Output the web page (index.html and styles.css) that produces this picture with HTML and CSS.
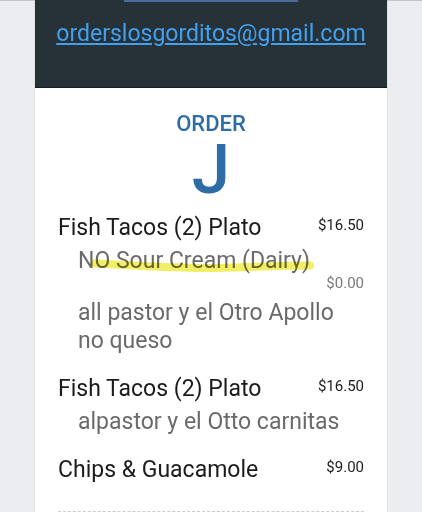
FILE: index.html
```html
<!DOCTYPE html>
<html lang="en">
<head>
    <meta charset="UTF-8">
    <meta name="viewport" content="width=device-width, initial-scale=1.0">
    <title>Order J</title>
    <link rel="stylesheet" href="styles.css">
</head>
<body>

<div class="ticket">
    <div class="ticket-header">
        <div class="header-bar"></div>
        <a class="email" href="mailto:orderslosgorditos@gmail.com">orderslosgorditos@gmail.com</a>
    </div>

    <div class="ticket-body">
        <div class="order-label">ORDER</div>
        <div class="order-letter">J</div>

        <div class="item">
            <div class="item-row">
                <span class="item-name">Fish Tacos (2) Plato</span>
                <span class="item-price">$16.50</span>
            </div>
            <div class="mod">
                NO Sour Cream (Dairy)
                <svg class="marker" width="240" height="30" viewBox="0 0 240 30">
                    <path d="M17 16.5 C60 18.5, 100 21.5, 130 21 S200 18.5, 232 18.5" />
                </svg>
            </div>
            <div class="mod-price">$0.00</div>
            <div class="note">all pastor y el Otro Apollo<br>no queso</div>
        </div>

        <div class="item">
            <div class="item-row">
                <span class="item-name">Fish Tacos (2) Plato</span>
                <span class="item-price">$16.50</span>
            </div>
            <div class="note">alpastor y el Otto carnitas</div>
        </div>

        <div class="item">
            <div class="item-row">
                <span class="item-name">Chips &amp; Guacamole</span>
                <span class="item-price">$9.00</span>
            </div>
        </div>

        <div class="divider"></div>
    </div>
</div>

</body>
</html>
```

FILE: styles.css
```css
body {
    margin: 0;
    background: linear-gradient(#c4c4c8 1px, #ecedf1 1px);
    font-family: Roboto, "Liberation Sans", sans-serif;
}
.ticket {
    width: 352px;
    margin: 0 auto;
    background: #fff;
    min-height: 512px;
    box-shadow: 0 0 1px rgba(0, 0, 0, 0.25);
}
.ticket-header {
    height: 87px;
    background: #263238;
    border-bottom: 1px solid #141a1d;
    text-align: center;
}
.header-bar {
    width: 174px;
    height: 2px;
    margin: 0 auto;
    background: #4a6d9c;
}
.email {
    display: inline-block;
    margin-top: 18px;
    font-size: 23px;
    line-height: 28px;
    color: #42a0ef;
}
.ticket-body {
    padding: 22px 23px 0;
}
.order-label {
    text-align: center;
    font-size: 22px;
    font-weight: 500;
    line-height: 28px;
    color: #2e6ca6;
}
.order-letter {
    text-align: center;
    font-size: 69px;
    font-weight: 500;
    line-height: 64px;
    color: #2e6ca6;
}
.item {
    margin-top: 12px;
}
.item + .item {
    margin-top: 20px;
}
.item-row {
    display: flex;
    justify-content: space-between;
    align-items: flex-start;
}
.item-name {
    font-size: 23px;
    line-height: 28px;
    color: #1b1b1b;
}
.item-price {
    padding-top: 2px;
    font-size: 15px;
    line-height: 18px;
    color: #1b1b1b;
}
.mod,
.note {
    margin-top: 5px;
    padding-left: 20px;
    font-size: 23px;
    line-height: 28px;
    color: #6a6a6a;
}
.mod {
    position: relative;
}
.marker {
    position: absolute;
    left: 20px;
    top: 0;
    mix-blend-mode: multiply;
}
.marker path {
    fill: none;
    stroke: #f2ee66;
    stroke-width: 8;
    stroke-linecap: round;
}
.mod-price {
    margin-top: -1px;
    text-align: right;
    font-size: 15px;
    line-height: 18px;
    color: #7a7a7a;
}
.mod-price + .note {
    margin-top: 7px;
}
.divider {
    margin-top: 27px;
    border-top: 1px dashed #c8ccd0;
}
```
